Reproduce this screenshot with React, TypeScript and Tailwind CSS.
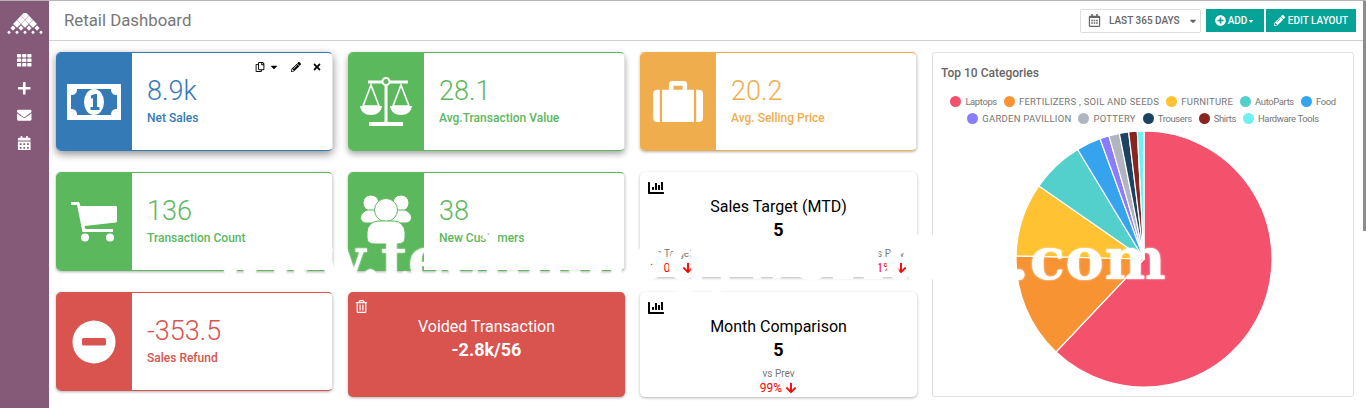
import React from "react";
import {
  FaCalendarAlt,
  FaCaretDown,
  FaChartBar,
  FaEnvelope,
  FaPencilAlt,
  FaPlus,
  FaPlusCircle,
  FaRegCalendarAlt,
  FaRegCopy,
  FaTh,
  FaTimes,
  FaArrowDown,
  FaRegTrashAlt,
} from "react-icons/fa";

const MoneyIcon = () => (
  <svg width="54" height="36" viewBox="0 0 54 36">
    <path
      fillRule="evenodd"
      fill="#fff"
      d="M0 0H54V36H0ZM10 5C10 9 8 11 4 11V25C8 25 10 27 10 31H44C44 27 46 25 50 25V11C46 11 44 9 44 5Z"
    />
    <ellipse cx="27" cy="18" rx="10" ry="13" fill="#fff" />
    <path fill="#337ab7" d="M24 11.5 28 10H30V23H32.5V26H23.5V23H26V14L24 14.8Z" />
  </svg>
);

const ScaleIcon = () => (
  <svg width="54" height="50" viewBox="0 0 54 50" fill="none" stroke="#fff">
    <path d="M9 5H49" strokeWidth="3" />
    <path d="M27 5V46" strokeWidth="3" />
    <path d="M10 47H44" strokeWidth="4" />
    <circle cx="27" cy="4.5" r="3.5" fill="#5cb85c" strokeWidth="2" />
    <path d="M12 8 4 29H20ZM42 8 34 29H50Z" strokeWidth="1.6" />
    <path fill="#fff" stroke="none" d="M1 29H23C22 35 18 38 12 38S2 35 1 29ZM31 29H53C52 35 48 38 42 38S32 35 31 29Z" />
  </svg>
);

const CaseIcon = () => (
  <svg width="50" height="43" viewBox="0 0 44 44" preserveAspectRatio="none" fill="#fff">
    <path fillRule="evenodd" d="M14 10V4Q14 1 17 1H27Q30 1 30 4V10H26V6H18V10Z" />
    <path d="M0 14Q0 10 4 10H6V43H4Q0 43 0 39ZM8 10H36V43H8ZM38 10H40Q44 10 44 14V39Q44 43 40 43H38Z" />
  </svg>
);

const CartIcon = () => (
  <svg width="48" height="40" viewBox="0 0 48 40" fill="#fff">
    <path d="M1 0H9L10.5 4H46Q47 4 47 5.500V19Q47 20 46 20.500L14.500 24 15.500 27H43V30H12.500L7 3H1Z" />
    <circle cx="15" cy="35.500" r="4" />
    <circle cx="40" cy="35.500" r="4" />
  </svg>
);

const UsersIcon = () => (
  <svg width="54" height="56" viewBox="0 0 54 56" fill="#fff" stroke="#5cb85c" strokeWidth="1">
    <circle cx="12" cy="9" r="8" />
    <circle cx="42" cy="9" r="8" />
    <path d="M2 21Q6 15 12 16L28 16 42 16Q48 15 52 21 54 27 48 29H6Q0 27 2 21Z" />
    <circle cx="27" cy="16" r="11.500" />
    <path d="M8 44V38Q9 28 19 27H35Q45 28 46 38V44Q46 50 38 50H16Q8 50 8 44Z" />
  </svg>
);

const NoEntryIcon = () => (
  <svg width="44" height="44" viewBox="0 0 44 44">
    <circle cx="22" cy="22" r="21.500" fill="#fff" />
    <rect x="10" y="18" width="24" height="7.500" rx="1.500" fill="#d9534f" />
  </svg>
);

const Logo = () => {
  const rows = [
    [17],
    [13, 21],
    [9, 17, 25],
    [5, 13, 21, 29],
    [1, 9, 17, 25, 33],
  ];
  return (
    <svg width="36" height="22" viewBox="0 0 36 22" fill="#fff">
      {rows.map((xs, r) =>
        xs.map((x) => {
          const size = r < 3 ? 2.8 : r === 3 ? 1.8 : 1.3;
          const cy = 2.500 + r * 4.200;
          return (
            <rect
              key={`${r}-${x}`}
              x={x + 1 - size}
              y={cy - size}
              width={size * 2}
              height={size * 2}
              transform={`rotate(45 ${x + 1} ${cy})`}
            />
          );
        })
      )}
    </svg>
  );
};

const slices = [
  { end: 223.4, color: "#f4516c" },
  { end: 271.4, color: "#f89334" },
  { end: 304.8, color: "#ffc233" },
  { end: 328.8, color: "#53d0cc" },
  { end: 339.9, color: "#36a3ee" },
  { end: 344.1, color: "#8b7bff" },
  { end: 348.9, color: "#b1b5c0" },
  { end: 353.1, color: "#1c4362" },
  { end: 357, color: "#8a2420" },
  { end: 360, color: "#6ff0f2" },
];

const point = (deg: number) => {
  const a = (deg * Math.PI) / 180;
  return `${130 + 128 * Math.sin(a)} ${130 - 128 * Math.cos(a)}`;
};

const Pie = () => (
  <svg width="260" height="260" viewBox="0 0 260 260">
    {slices.map((s, i) => {
      const start = i === 0 ? 0 : slices[i - 1].end;
      const large = s.end - start > 180 ? 1 : 0;
      return (
        <path
          key={s.color}
          d={`M130 130L${point(start)}A128 128 0 ${large} 1 ${point(s.end)}Z`}
          fill={s.color}
          stroke="#fff"
          strokeWidth="1.2"
        />
      );
    })}
  </svg>
);

const Legend = ({ color, label, caps }: { color: string; label: string; caps?: boolean }) => (
  <span className={`flex items-center gap-[4px] ${caps ? "tracking-[0.25px]" : "tracking-[-0.4px]"}`}>
    <span className="size-[11px] rounded-full" style={{ backgroundColor: color }} />
    {label}
  </span>
);

const StatCard = ({
  border,
  bg,
  text,
  value,
  label,
  icon,
  shadow,
  children,
}: {
  border: string;
  bg: string;
  text: string;
  value: string;
  label: string;
  icon: React.ReactNode;
  shadow: string;
  children?: React.ReactNode;
}) => (
  <div className={`relative flex h-[99px] overflow-hidden rounded-[5px] border-y border-r ${border} border-r-[#e2e2e2] ${shadow} bg-white`}>
    <div className={`flex w-[76px] shrink-0 items-center justify-center ${bg}`}>{icon}</div>
    <div className={`flex flex-col pl-[15px] pt-[22px] ${text}`}>
      <span className="text-[27px] leading-[32px] font-[300]">{value}</span>
      <span className="mt-[3px] text-[12px] leading-[16px] font-medium">{label}</span>
    </div>
    {children}
  </div>
);

const softShadow = "shadow-[0_1px_3px_rgba(0,0,0,0.3)]";

export default function App() {
  return (
    <div
      className="relative flex h-[408px] w-[1366px] overflow-hidden border-t border-[#b4b4b4] bg-white"
      style={{ fontFamily: "Roboto, sans-serif" }}
    >
      {/* Sidebar */}
      <aside className="flex w-[49px] shrink-0 flex-col items-center bg-[#855a79] pt-[12px] text-white">
        <Logo />
        <div className="mt-[18px] flex flex-col items-center gap-[13px] text-[14.5px]">
          <FaTh />
          <FaPlus />
          <FaEnvelope />
          <FaCalendarAlt />
        </div>
      </aside>

      <div className="flex min-w-0 flex-1 flex-col">
        {/* Header */}
        <header className="flex h-[40px] shrink-0 items-center justify-between border-b border-[#cfcfcf] pl-[15px] pr-[10px]">
          <h1 className="pt-[1px] text-[16.8px] font-normal text-[#777]">Retail Dashboard</h1>
          <div className="flex items-center text-[10px] font-medium">
            <button className="mr-[5px] flex h-[24px] w-[121px] items-center rounded-[2px] border border-[#ddd] pl-[7px] text-[#666]">
              <FaRegCalendarAlt className="mr-[8px] text-[13px]" />
              LAST 365 DAYS
              <FaCaretDown className="ml-[8px] text-[10px]" />
            </button>
            <button className="mr-[2px] flex h-[23px] w-[58px] items-center justify-center bg-[#05a297] text-white">
              <FaPlusCircle className="mr-[2px] text-[11px]" />
              ADD
              <FaCaretDown className="text-[8px]" />
            </button>
            <button className="flex h-[23px] w-[90px] items-center justify-center bg-[#05a297] text-white">
              <FaPencilAlt className="mr-[3px] text-[11px]" />
              EDIT LAYOUT
            </button>
          </div>
        </header>

        {/* Content */}
        <main className="flex gap-[15px] pl-[7px] pt-[11px]">
          <div className="grid w-[861px] grid-cols-3 grid-rows-[99px_99px_105px] items-start gap-x-[15px] gap-y-[21px]">
            <StatCard
              border="border-[#337ab7]"
              bg="bg-[#337ab7]"
              text="text-[#337ab7]"
              value="8.9k"
              label="Net Sales"
              icon={<MoneyIcon />}
              shadow="shadow-[0_3px_9px_rgba(0,0,0,0.45)]"
            >
              <div className="absolute right-[10px] top-[9px] flex items-center text-[10px] text-black">
                <FaRegCopy />
                <FaCaretDown className="ml-[4px] mr-[12px] text-[10px]" />
                <FaPencilAlt className="mr-[11px]" />
                <FaTimes />
              </div>
            </StatCard>
            <StatCard
              border="border-[#5cb85c]"
              bg="bg-[#5cb85c]"
              text="text-[#5cb85c]"
              value="28.1"
              label="Avg.Transaction Value"
              icon={<ScaleIcon />}
              shadow="shadow-[0_3px_6px_rgba(0,0,0,0.35)]"
            />
            <StatCard
              border="border-[#f0ad4e]"
              bg="bg-[#f0ad4e]"
              text="text-[#f0ad4e]"
              value="20.2"
              label="Avg. Selling Price"
              icon={<CaseIcon />}
              shadow={softShadow}
            />
            <StatCard
              border="border-[#5cb85c]"
              bg="bg-[#5cb85c]"
              text="text-[#5cb85c]"
              value="136"
              label="Transaction Count"
              icon={<CartIcon />}
              shadow={softShadow}
            />
            <StatCard
              border="border-[#5cb85c]"
              bg="bg-[#5cb85c]"
              text="text-[#5cb85c]"
              value="38"
              label="New Customers"
              icon={<UsersIcon />}
              shadow={softShadow}
            />
            <div className={`relative flex h-[105px] flex-col items-center rounded-[5px] bg-white pt-[25px] ${softShadow}`}>
              <FaChartBar className="absolute left-[8px] top-[8px] text-[16px] text-black" />
              <span className="text-[16px] leading-[20px] text-black">Sales Target (MTD)</span>
              <span className="mt-[2px] text-[18px] leading-[22px] font-bold text-black">5</span>
              <div className="mt-[7px] flex w-full justify-between px-[10px] text-center">
                <div>
                  <div className="text-[10px] leading-[12px] text-[#777]">vs Target</div>
                  <div className="flex items-center text-[12px] leading-[16px] text-[#f00]">
                    100% <FaArrowDown className="ml-[3px] text-[12px]" />
                  </div>
                </div>
                <div>
                  <div className="text-[10px] leading-[12px] text-[#777]">vs Prev</div>
                  <div className="flex items-center text-[12px] leading-[16px] text-[#f00]">
                    91% <FaArrowDown className="ml-[3px] text-[12px]" />
                  </div>
                </div>
              </div>
            </div>
            <StatCard
              border="border-[#d9534f]"
              bg="bg-[#d9534f]"
              text="text-[#d9534f]"
              value="-353.5"
              label="Sales Refund"
              icon={<NoEntryIcon />}
              shadow={softShadow}
            />
            <div className={`relative flex h-[105px] flex-col items-center rounded-[5px] bg-[#d9534f] pt-[25px] text-white ${softShadow}`}>
              <FaRegTrashAlt className="absolute left-[7px] top-[8px] text-[13px]" />
              <span className="text-[16px] leading-[20px]">Voided Transaction</span>
              <span className="mt-[2px] text-[18px] leading-[22px] font-bold">-2.8k/56</span>
            </div>
            <div className={`relative flex h-[105px] flex-col items-center rounded-[5px] bg-white pt-[25px] ${softShadow}`}>
              <FaChartBar className="absolute left-[8px] top-[8px] text-[16px] text-black" />
              <span className="text-[16px] leading-[20px] text-black">Month Comparison</span>
              <span className="mt-[2px] text-[18px] leading-[22px] font-bold text-black">5</span>
              <span className="mt-[7px] text-[10px] leading-[12px] text-[#777]">vs Prev</span>
              <span className="flex items-center text-[12px] leading-[16px] text-[#f00]">
                99% <FaArrowDown className="ml-[3px] text-[12px]" />
              </span>
            </div>
          </div>

          {/* Chart */}
          <section className="flex h-[345px] w-[422px] shrink-0 flex-col rounded-[3px] border border-[#e0e0e0] pl-[8px] pt-[12px]">
            <h2 className="text-[12px] leading-[16px] font-medium text-[#666]">Top 10 Categories</h2>
            <div className="mt-[15px] flex w-[404px] flex-col items-center gap-[6px] text-[9.5px] leading-[11px] text-[#777]">
              <div className="flex gap-[7px]">
                <Legend color="#f4516c" label="Laptops" />
                <Legend color="#f89334" label="FERTILIZERS , SOIL AND SEEDS" caps />
                <Legend color="#ffc233" label="FURNITURE" caps />
                <Legend color="#53d0cc" label="AutoParts" />
                <Legend color="#36a3ee" label="Food" />
              </div>
              <div className="flex gap-[7px]">
                <Legend color="#8b7bff" label="GARDEN PAVILLION" caps />
                <Legend color="#b1b5c0" label="POTTERY" caps />
                <Legend color="#1c4362" label="Trousers" />
                <Legend color="#8a2420" label="Shirts" />
                <Legend color="#6ff0f2" label="Hardware Tools" />
              </div>
            </div>
            <div className="ml-[73px] mt-[5px]">
              <Pie />
            </div>
          </section>
        </main>
      </div>

      {/* Scrollbar thumb */}
      <div className="absolute right-0 top-0 h-[230px] w-[3px] bg-[#8c8c8c]" />

      {/* Watermark */}
      <div
        className="pointer-events-none absolute left-[215px] top-[224px] whitespace-nowrap text-[58px] leading-[68px] font-bold tracking-[0.4px] text-white [text-shadow:0_0_2px_#fff]"
        style={{ fontFamily: '"DejaVu Serif", serif' }}
      >
        www.technologyworldhq.com
      </div>
    </div>
  );
}
